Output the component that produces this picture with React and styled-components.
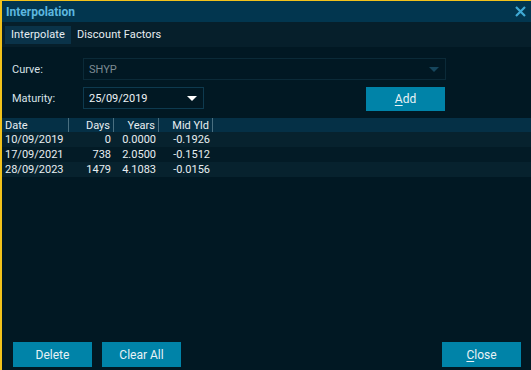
import React from 'react'
import styled, { createGlobalStyle } from 'styled-components'

const GlobalStyle = createGlobalStyle`
  html, body {
    margin: 0;
    padding: 0;
    background: #011823;
  }
  body {
    font-family: Roboto, "Liberation Sans", sans-serif;
  }
`

const Window = styled.div`
  width: 531px;
  height: 370px;
  box-sizing: border-box;
  border-top: 1px solid #f2c21b;
  border-left: 2px solid #f2c21b;
  background: #011823;
  display: flex;
  flex-direction: column;
  overflow: hidden;
`

const TitleBar = styled.div`
  height: 21px;
  flex: none;
  display: flex;
  align-items: center;
  justify-content: space-between;
  padding: 0 5px 0 4px;
  background: #02364f;
`

const Title = styled.span`
  font-size: 12px;
  font-weight: bold;
  color: #5cb7df;
`

const CloseX = styled.svg`
  width: 11px;
  height: 11px;
  display: block;
`

const TabBar = styled.div`
  height: 25px;
  flex: none;
  display: flex;
  align-items: center;
  padding: 0 3px;
  background: #061f2b;
`

const Tab = styled.div`
  height: 18px;
  display: flex;
  align-items: center;
  padding: 0 6px;
  font-size: 11px;
  letter-spacing: 0.1px;
  color: #e6eef2;
  background: ${p => (p.active ? '#0a3349' : 'transparent')};
`

const Form = styled.div`
  display: flex;
  flex-direction: column;
  gap: 7px;
  padding: 11px 0 0 10px;
`

const Row = styled.div`
  display: flex;
  align-items: flex-start;
`

const Label = styled.span`
  width: 71px;
  height: 22px;
  display: flex;
  align-items: center;
  font-size: 11px;
  color: #d8e2e8;
`

const SelectBox = styled.div`
  width: ${p => p.w}px;
  height: 22px;
  box-sizing: border-box;
  border: 1px solid ${p => (p.disabled ? '#0b2a38' : '#0e3a4f')};
  display: flex;
  align-items: center;
  justify-content: space-between;
  padding: 0 6px 0 5px;
  font-size: 11px;
  color: ${p => (p.disabled ? '#7d8c93' : '#eef3f6')};
`

const Caret = styled.span`
  width: 0;
  height: 0;
  border-left: 5px solid transparent;
  border-right: 5px solid transparent;
  border-top: 5px solid ${p => (p.disabled ? '#16465d' : '#ffffff')};
`

const Button = styled.button`
  width: ${p => p.w || 79}px;
  height: ${p => p.h || 25}px;
  border: none;
  padding: 0;
  background: #0083a8;
  color: #e8f2f6;
  font-family: Roboto, "Liberation Sans", sans-serif;
  font-size: 12px;
  margin-left: ${p => p.ml || 0}px;

  u {
    text-decoration-thickness: 1px;
    text-underline-offset: 2px;
  }
`

const Table = styled.div`
  margin-top: 7px;
  display: flex;
  flex-direction: column;
`

const TRow = styled.div`
  display: grid;
  grid-template-columns: 67px 45px 45px 54px 1fr;
  height: ${p => (p.head ? 14 : 15)}px;
  align-items: center;
  font-size: 11px;
  color: #e8eef1;
  background: ${p => (p.head ? '#053046' : p.odd ? '#07222e' : '#031b26')};
`

const Cell = styled.span`
  box-sizing: border-box;
  height: 100%;
  display: flex;
  align-items: center;
  justify-content: ${p => (p.left ? 'flex-start' : 'flex-end')};
  padding: ${p => (p.left ? '0 0 0 3px' : '0 3px 0 0')};
  border-right: ${p => (p.sep ? '1px solid #4a6f80' : 'none')};
  white-space: nowrap;
`

const Spacer = styled.div`
  flex: 1;
`

const Footer = styled.div`
  display: flex;
  align-items: center;
  padding: 0 10px 3px 11px;
  height: 25px;
  flex: none;
`

const rows = [
  ['10/09/2019', '0', '0.0000', '-0.1926'],
  ['17/09/2021', '738', '2.0500', '-0.1512'],
  ['28/09/2023', '1479', '4.1083', '-0.0156'],
]

export default function App() {
  return (
    <>
      <GlobalStyle />
      <Window>
        <TitleBar>
          <Title>Interpolation</Title>
          <CloseX viewBox="0 0 11 11">
            <path d="M1 1 L10 10 M10 1 L1 10" stroke="#3fa9d4" strokeWidth="2.2" />
          </CloseX>
        </TitleBar>
        <TabBar>
          <Tab active>Interpolate</Tab>
          <Tab>Discount Factors</Tab>
        </TabBar>
        <Form>
          <Row>
            <Label>Curve:</Label>
            <SelectBox w={363} disabled>
              SHYP
              <Caret disabled />
            </SelectBox>
          </Row>
          <Row>
            <Label>Maturity:</Label>
            <SelectBox w={121}>
              25/09/2019
              <Caret />
            </SelectBox>
            <Button ml={162} h={24}>
              <u>A</u>dd
            </Button>
          </Row>
        </Form>
        <Table>
          <TRow head>
            <Cell left sep>Date</Cell>
            <Cell sep>Days</Cell>
            <Cell sep>Years</Cell>
            <Cell sep>Mid Yld</Cell>
            <span />
          </TRow>
          {rows.map((r, i) => (
            <TRow key={r[0]} odd={i % 2 === 0}>
              <Cell left>{r[0]}</Cell>
              <Cell>{r[1]}</Cell>
              <Cell>{r[2]}</Cell>
              <Cell>{r[3]}</Cell>
              <span />
            </TRow>
          ))}
        </Table>
        <Spacer />
        <Footer>
          <Button>Delete</Button>
          <Button ml={10}>Clear All</Button>
          <Spacer />
          <Button>
            <u>C</u>lose
          </Button>
        </Footer>
      </Window>
    </>
  )
}
